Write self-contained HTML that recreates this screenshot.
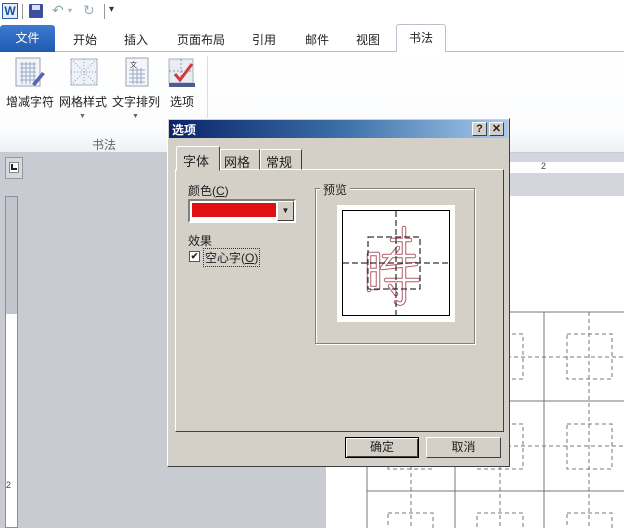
<!DOCTYPE html>
<html><head><meta charset="utf-8"><style>
*{margin:0;padding:0;box-sizing:border-box}
html,body{width:624px;height:528px;overflow:hidden}
body{position:relative;background:#c9cbd2;font-family:"Liberation Sans","Noto Sans CJK SC",sans-serif;font-size:12px;color:#222}
.a{position:absolute}
</style></head><body>
<div class="a" style="left:0;top:0;width:624px;height:25px;background:#fff"></div>
<div class="a" style="left:2px;top:3px;width:16px;height:16px;border:1px solid #2a5aa8;background:#e6eefa;color:#1e4f9c;font-weight:bold;font-size:12px;line-height:14px;text-align:center">W</div>
<div class="a" style="left:22px;top:4px;width:1px;height:15px;background:#999"></div>
<div class="a" style="left:29px;top:4px;width:14px;height:14px;background:#3b4fa0;border-radius:1px"></div>
<div class="a" style="left:32px;top:5px;width:8px;height:5px;background:#dde"></div>
<div class="a" style="left:52px;top:2px;color:#8aa;font-size:14px">↶</div>
<div class="a" style="left:68px;top:6px;color:#aaa;font-size:8px">▾</div>
<div class="a" style="left:83px;top:2px;color:#9ab;font-size:14px">↻</div>
<div class="a" style="left:104px;top:4px;width:1px;height:15px;background:#999"></div>
<div class="a" style="left:109px;top:4px;font-size:10px;color:#333">▾</div>
<div class="a" style="left:0;top:25px;width:624px;height:27px;background:#fff;border-bottom:1px solid #b9c0cc"></div>
<div class="a" style="left:0;top:25px;width:55px;height:27px;background:linear-gradient(#3d7ad0,#1f5aaf);border-radius:3px 3px 0 0;color:#fff;text-align:center;line-height:27px;font-size:12px">文件</div>
<div class="a" style="left:73px;top:31px">开始</div>
<div class="a" style="left:124px;top:31px">插入</div>
<div class="a" style="left:177px;top:31px">页面布局</div>
<div class="a" style="left:252px;top:31px">引用</div>
<div class="a" style="left:305px;top:31px">邮件</div>
<div class="a" style="left:356px;top:31px">视图</div>
<div class="a" style="left:396px;top:24px;width:50px;height:29px;background:#fff;border:1px solid #b9c0cc;border-bottom:none;border-radius:3px 3px 0 0;text-align:center;line-height:27px">书法</div>
<div class="a" style="left:0;top:52px;width:624px;height:101px;background:linear-gradient(#fff,#fbfcfd 80%,#eef0f3);border-bottom:1px solid #c5cad3"></div>
<div class="a" style="left:207px;top:56px;width:1px;height:94px;background:#d9dde3"></div>
<svg class="a" style="left:14px;top:56px" width="32" height="34"><rect x="2" y="2" width="24" height="28" fill="#f2f4f8" stroke="#9aa3b4"/><g stroke="#9aa8c8"><path d="M6 8h16M6 12h16M6 16h16M6 20h16M6 24h16M8 6v22M12 6v22M16 6v22M20 6v22"/></g><path d="M18 28l10-12 3 2-10 12z" fill="#5a63b8"/></svg>
<svg class="a" style="left:68px;top:56px" width="32" height="34"><rect x="3" y="3" width="26" height="26" fill="#eef1f8" stroke="#a8b0c2"/><path d="M3 3l26 26M29 3L3 29M16 3v26M3 16h26" stroke="#8898b8" stroke-dasharray="1 2"/></svg>
<svg class="a" style="left:123px;top:56px" width="30" height="34"><rect x="3" y="2" width="22" height="28" fill="#f4f5f8" stroke="#9aa3b4"/><text x="7" y="11" font-size="7" fill="#333">文</text><g stroke="#9aa8c8"><path d="M6 14h16M6 18h16M6 22h16M6 26h16M10 12v16M14 12v16M18 12v16"/></g></svg>
<svg class="a" style="left:167px;top:56px" width="30" height="34"><rect x="2" y="3" width="24" height="24" fill="#e8ecf4" stroke="#a8b0c2"/><path d="M2 15h24M14 3v24" stroke="#8898b8" stroke-dasharray="2 2"/><rect x="2" y="27" width="26" height="4" fill="#4c5c8c"/><path d="M8 18l5 6 12-16" stroke="#d23a3a" stroke-width="3" fill="none"/></svg>
<div class="a" style="left:6px;top:93px">增减字符</div>
<div class="a" style="left:59px;top:93px">网格样式</div>
<div class="a" style="left:112px;top:93px">文字排列</div>
<div class="a" style="left:170px;top:93px">选项</div>
<div class="a" style="left:79px;top:113px;font-size:7px;color:#666">▼</div>
<div class="a" style="left:132px;top:113px;font-size:7px;color:#666">▼</div>
<div class="a" style="left:92px;top:136px;color:#666">书法</div>
<div class="a" style="left:5px;top:157px;width:18px;height:22px;border:1px solid #999;background:#d6d8de"></div>
<div class="a" style="left:9px;top:162px;width:10px;height:11px;border:1px solid #888;background:#fff"></div>
<div class="a" style="left:11px;top:164px;width:2px;height:6px;background:#222"></div>
<div class="a" style="left:11px;top:168px;width:6px;height:2px;background:#222"></div>
<div class="a" style="left:5px;top:196px;width:13px;height:332px;border:1px solid #8a8f99;background:#fff"></div>
<div class="a" style="left:6px;top:197px;width:11px;height:117px;background:#c2c5cc"></div>
<div class="a" style="left:6px;top:480px;font-size:9px;color:#444">2</div>
<div class="a" style="left:510px;top:153px;width:114px;height:43px;background:#d3d6dc"></div>
<div class="a" style="left:510px;top:162px;width:114px;height:11px;background:#fff"></div>
<div class="a" style="left:541px;top:161px;font-size:9px;color:#444">2</div>
<div class="a" style="left:326px;top:196px;width:298px;height:332px;background:#fff"></div>
<svg class="a" style="left:326px;top:196px" width="298" height="332">
<g stroke="#777" fill="none"><path d="M41 116V332M129 116V332M218 116V332M41 116H298M41 205H298M41 295H298"/></g>
<g stroke="#777" fill="none" stroke-dasharray="4 3">
<path d="M85 116V332M174 116V332M263 116V332M41 161H298M41 250H298"/>
<rect x="62" y="138" width="45" height="45"/><rect x="151" y="138" width="46" height="45"/><rect x="241" y="138" width="45" height="45"/>
<rect x="62" y="228" width="45" height="45"/><rect x="151" y="228" width="46" height="45"/><rect x="241" y="228" width="45" height="45"/>
<rect x="62" y="317" width="45" height="45"/><rect x="151" y="317" width="46" height="45"/><rect x="241" y="317" width="45" height="45"/>
</g></svg>
<div class="a" style="left:167px;top:118px;width:343px;height:349px;background:#d4d0c8;border:1px solid;border-color:#fff #404040 #404040 #fff"></div>
<div class="a" style="left:169px;top:120px;width:339px;height:18px;background:linear-gradient(90deg,#0a246a,#3a6ea5 50%,#a6caf0)"></div>
<div class="a" style="left:172px;top:121px;color:#fff;font-weight:bold">选项</div>
<div class="a" style="left:472px;top:122px;width:15px;height:14px;background:#d4d0c8;border:1px solid;border-color:#fff #404040 #404040 #fff;font-weight:bold;font-size:11px;text-align:center;line-height:12px">?</div>
<div class="a" style="left:489px;top:122px;width:15px;height:14px;background:#d4d0c8;border:1px solid;border-color:#fff #404040 #404040 #fff;font-weight:bold;font-size:11px;text-align:center;line-height:12px">✕</div>
<div class="a" style="left:175px;top:169px;width:329px;height:263px;border:1px solid;border-color:#fff #404040 #404040 #fff"></div>
<div class="a" style="left:176px;top:146px;width:44px;height:25px;background:#d4d0c8;border:1px solid;border-color:#fff #404040 transparent #fff;border-radius:2px 2px 0 0;padding:4px 0 0 6px;font-size:13px">字体</div>
<div class="a" style="left:220px;top:149px;width:40px;height:21px;border:1px solid;border-color:#fff #404040 transparent #fff;padding:2px 0 0 3px;font-size:13px">网格</div>
<div class="a" style="left:260px;top:149px;width:42px;height:21px;border:1px solid;border-color:#fff #404040 transparent #fff;padding:2px 0 0 5px;font-size:13px">常规</div>
<div class="a" style="left:188px;top:182px">颜色(<u>C</u>)</div>
<div class="a" style="left:188px;top:199px;width:108px;height:24px;border:2px solid;border-color:#808080 #fff #fff #808080;background:#fff"></div>
<div class="a" style="left:192px;top:203px;width:84px;height:14px;background:#e01010"></div>
<div class="a" style="left:277px;top:201px;width:17px;height:20px;background:#d4d0c8;border:1px solid;border-color:#fff #404040 #404040 #fff;font-size:8px;text-align:center;line-height:18px">▼</div>
<div class="a" style="left:188px;top:232px">效果</div>
<div class="a" style="left:189px;top:251px;width:11px;height:11px;border:1px solid #555;background:#fff;font-size:9px;line-height:9px;text-align:center;font-weight:bold">✔</div>
<div class="a" style="left:204px;top:249px;outline:1px dotted #333;padding:0 1px">空心字(<u>O</u>)</div>
<div class="a" style="left:315px;top:188px;width:160px;height:156px;border:1px solid #808080;box-shadow:1px 1px 0 #fff inset,1px 1px 0 #fff"></div>
<div class="a" style="left:320px;top:181px;background:#d4d0c8;padding:0 3px">预览</div>
<div class="a" style="left:337px;top:205px;width:118px;height:117px;background:#fff"></div>
<svg class="a" style="left:342px;top:210px" width="109" height="107">
<rect x="0.5" y="0.5" width="107" height="105" fill="#fff" stroke="#000"/>
<g stroke="#000" stroke-dasharray="6 3" fill="none"><path d="M54 1v105M1 53h107"/><rect x="26" y="27" width="52" height="52"/></g>
<g fill="none" stroke-linecap="round" stroke-linejoin="round">
<g stroke="#b05a6a" stroke-width="4.5"><path d="M27 44v36M27 44h9v34h-9M28 60h7M62 18v72q-2 6-8 2M50 30h18M42 46h30M56 38l-16 20 34-4M44 70h32M48 76l6 8"/></g>
<g stroke="#fff" stroke-width="2.5"><path d="M27 44v36M27 44h9v34h-9M28 60h7M62 18v72q-2 6-8 2M50 30h18M42 46h30M56 38l-16 20 34-4M44 70h32M48 76l6 8"/></g>
</g>
<g stroke="#000" stroke-dasharray="6 3" fill="none" opacity="0.9"><path d="M54 1v105M1 53h107"/><rect x="26" y="27" width="52" height="52"/></g>
</svg>
<div class="a" style="left:345px;top:437px;width:74px;height:21px;border:1px solid #000;box-shadow:inset 1px 1px 0 #fff,inset -1px -1px 0 #404040;text-align:center;line-height:19px">确定</div>
<div class="a" style="left:426px;top:437px;width:75px;height:21px;border:1px solid;border-color:#fff #404040 #404040 #fff;text-align:center;line-height:19px">取消</div>
</body></html>
